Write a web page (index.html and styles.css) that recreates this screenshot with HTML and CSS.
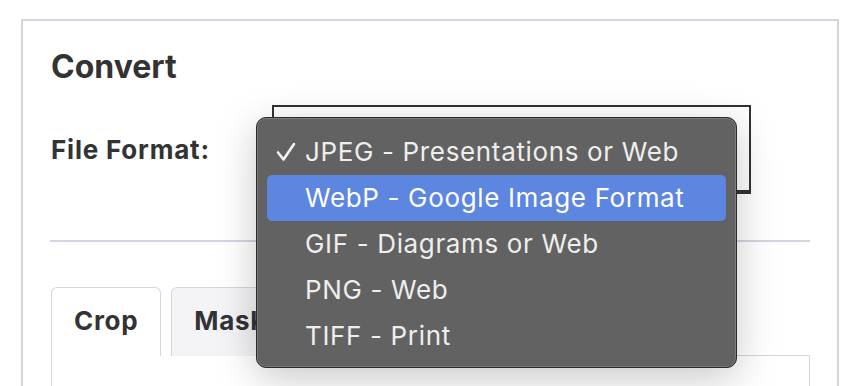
FILE: index.html
```html
<!DOCTYPE html>
<html>
	<head>
		<meta charset="UTF-8">
		<title>Convert</title>
		<link rel="stylesheet" href="styles.css">
	</head>
	<body>
		<div class="card">
			<h2 class="title">Convert</h2>
			<div class="field">
				<span class="label">File Format:</span>
				<div class="selectBox"></div>
			</div>
			<div class="rule"></div>
			<div class="tabs">
				<span class="tab active">Crop</span>
				<span class="tab">Masking</span>
				<span class="tabFill"></span>
			</div>
			<div class="panel"></div>

			<ul class="menu">
				<li class="item checked">
					<svg class="check" width="20" height="20" viewBox="0 0 20 20"><polyline points="2,10.5 7.5,17.5 18,2" fill="none" stroke="#f2f2f2" stroke-width="2.6" stroke-linecap="round" stroke-linejoin="round"/></svg>
					JPEG - Presentations or Web
				</li>
				<li class="item hover">WebP - Google Image Format</li>
				<li class="item">GIF - Diagrams or Web</li>
				<li class="item">PNG - Web</li>
				<li class="item">TIFF - Print</li>
			</ul>
		</div>
	</body>
</html>
```

FILE: styles.css
```css
*{
	margin: 0;
	padding: 0;
	list-style-type: none;
	box-sizing: border-box;
}
html{
	overflow: hidden;
}
body{
	font-family: Inter, "Liberation Sans", sans-serif;
	color: #333;
	background: #fff;
}
.card{
	position: relative;
	margin: 19px 11px 0 21px;
	height: 400px;
	border: 2px solid #d5d4e0;
	padding: 28px 27px 0 28px;
}
.title{
	font-size: 32px;
	line-height: 36px;
	font-weight: 700;
	color: #333;
}
.field{
	display: flex;
	align-items: center;
	margin-top: 20px;
	height: 89px;
}
.label{
	width: 221px;
	font-size: 26px;
	letter-spacing: 0.8px;
	font-weight: 700;
	color: #333;
}
.selectBox{
	width: 479px;
	height: 89px;
	border: 2px solid #333;
	border-bottom-width: 4px;
	background: #fff;
}
.rule{
	margin-top: 46px;
	margin-left: -1px;
	height: 2px;
	background: #d5d4e0;
}
.tabs{
	display: flex;
	align-items: flex-end;
	gap: 10px;
	margin-top: 45px;
	height: 69px;
}
.tab{
	display: block;
	height: 69px;
	padding: 0 22px;
	line-height: 66px;
	font-size: 26px;
	letter-spacing: 0.7px;
	font-weight: 700;
	color: #333;
	border: 1px solid #d5d4e0;
	border-bottom: none;
	border-radius: 6px 6px 0 0;
	background: #f4f4f6;
}
.tab.active{
	background: #fff;
}
.tabFill{
	flex: 1;
	border-bottom: 1px solid #d5d4e0;
	margin-left: -10px;
}
.panel{
	height: 60px;
	border: 1px solid #d5d4e0;
	border-top: none;
}
.menu{
	position: absolute;
	left: 233px;
	top: 96px;
	width: 481px;
	height: 251px;
	padding: 11px 10px 0 10px;
	background: #626262;
	border: 1px solid #2a2a2a;
	border-radius: 10px;
	box-shadow: inset 0 0 0 1px #7c7c7c, 0 10px 40px rgba(0, 0, 0, 0.22);
}
.item{
	position: relative;
	height: 46px;
	line-height: 46px;
	padding-left: 38px;
	font-size: 26px;
	letter-spacing: 0.65px;
	color: #eee;
	border-radius: 5px;
}
.item.hover{
	background: #5d86e0;
	color: #fff;
}
.check{
	position: absolute;
	left: 9px;
	top: 13px;
}
```
